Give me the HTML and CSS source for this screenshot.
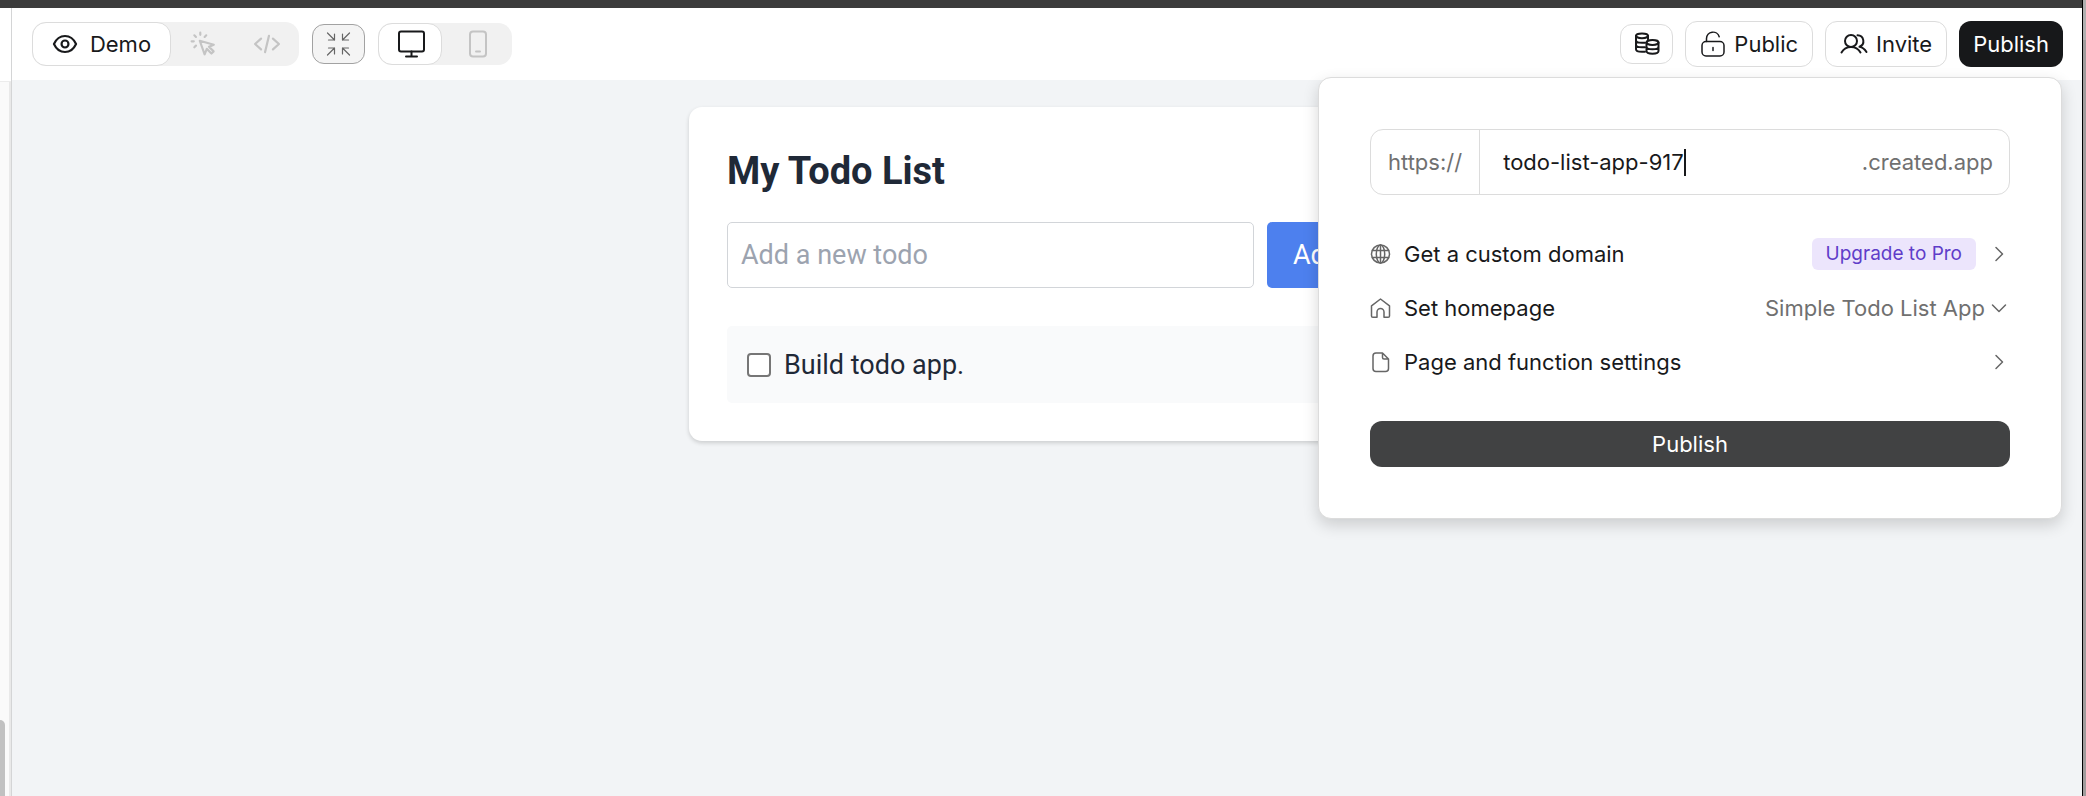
FILE: index.html
```html
<!DOCTYPE html>
<html lang="en">
<head>
    <meta charset="UTF-8">
    <meta name="viewport" content="width=device-width, initial-scale=1.0">
    <title>Simple Todo List App</title>
    <link rel="stylesheet" href="styles.css">
</head>
<body>
    <div class="window">
        <div class="window-main">
            <div class="title-strip"></div>
            <div class="workspace">
                <aside class="side">
                    <div class="side-head"></div>
                    <div class="side-body">
                        <div class="side-scroll"></div>
                    </div>
                </aside>

                <div class="content">
                    <header class="toolbar">
                        <div class="segmented modes">
                            <button class="segment segment-active segment-demo">
                                <svg width="26" height="26" viewBox="0 0 24 24"><path d="M1.800 12C4 7.200 7.600 4.600 12 4.600S20 7.200 22.200 12C20 16.800 16.400 19.400 12 19.400S4 16.800 1.800 12z"/><circle cx="12" cy="12" r="3.200"/></svg>
                                Demo
                            </button>
                            <button class="segment" aria-label="Select element">
                                <svg width="26" height="26" viewBox="0 0 24 24"><path d="M9 9l4.500 12.500 2-5 4.300 4.300 2-2-4.300-4.300 4.500-1.800z"/><path d="M9.500 1.500v2M4 4l1.500 1.500M15 4l-1.500 1.500M1.500 9.500h2M4 15l1.500-1.500"/></svg>
                            </button>
                            <button class="segment" aria-label="Code">
                                <svg width="26" height="26" viewBox="0 0 24 24"><path d="M6.500 7L1 12l5.500 5M17.500 7l5.500 5-5.500 5M13.800 4.500l-3.600 15"/></svg>
                            </button>
                        </div>

                        <button class="icon-button icon-button-on" aria-label="Collapse">
                            <svg width="26" height="26" viewBox="0 0 26 26"><path d="M1.500 2l7 7M8.500 3v6h-6M23.500 2l-7 7M16.500 3v6h6M1.500 24l7-7M2.500 17h6v6M23.500 24l-7-7M22.500 17h-6v6"/></svg>
                        </button>

                        <div class="segmented devices">
                            <button class="segment segment-active" aria-label="Desktop">
                                <svg width="30" height="30" viewBox="0 0 30 30"><rect x="4" y="2.500" width="25" height="20" rx="2"/><path d="M16.500 22.500V27M11 27.500h11"/></svg>
                            </button>
                            <button class="segment" aria-label="Mobile">
                                <svg width="30" height="30" viewBox="0 0 30 30"><rect x="8" y="2.500" width="16" height="25" rx="3"/><path d="M14 22.500h4"/></svg>
                            </button>
                        </div>

                        <div class="actions">
                            <button class="icon-button" aria-label="Database">
                                <svg width="26" height="26" viewBox="0 0 26 26"><ellipse cx="8" cy="4.800" rx="6" ry="2.400"/><path d="M2 4.800v13.400c0 1.500 2.500 2.600 6 2.600h3M14 4.800v3.500M2 9.300c0 1.400 2.500 2.500 6 2.500h3M2 13.800c0 1.400 2.500 2.500 6 2.500h3"/><ellipse cx="18.500" cy="11.500" rx="6" ry="2.400"/><path d="M12.500 11.500v8.600c0 1.500 2.600 2.600 6 2.600s6-1.100 6-2.600v-8.600M12.500 15.800c0 1.400 2.600 2.500 6 2.500s6-1.100 6-2.500"/></svg>
                            </button>
                            <button class="outline-button">
                                <svg class="thin" width="26" height="26" viewBox="0 0 26 26"><rect x="2" y="10.500" width="22" height="14.500" rx="4"/><path d="M6.500 10.500V7.500a6.500 6.500 0 0 1 12.700-1.800M13 16.500v3"/></svg>
                                Public
                            </button>
                            <button class="outline-button">
                                <svg width="28" height="28" viewBox="0 0 28 28"><circle cx="11" cy="11" r="6"/><path d="M1.500 22.500c2-3.500 5.500-5.500 9.500-5.500s7.500 2 9.500 5.500M17.500 5.200a6 6 0 0 1 2 11.600c3 .6 5.300 2.500 7 5.200"/></svg>
                                Invite
                            </button>
                            <button class="publish-button">Publish</button>
                        </div>
                    </header>

                    <main class="preview">
                        <section class="todo-card">
                            <h1 class="todo-title">My Todo List</h1>
                            <form class="todo-form">
                                <input class="todo-input" type="text" placeholder="Add a new todo" aria-label="Add a new todo">
                                <button class="todo-add" type="button">Add</button>
                            </form>
                            <label class="todo-item">
                                <input class="todo-check" type="checkbox">
                                Build todo app.
                            </label>
                        </section>
                    </main>

                    <div class="popover">
                        <div class="url-field">
                            <label class="url-prefix" for="subdomain">https://</label>
                            <input class="url-input" id="subdomain" type="text" value="todo-list-app-917" autocomplete="off" spellcheck="false">
                            <span class="caret"></span>
                            <span class="url-suffix">.created.app</span>
                        </div>

                        <div class="options">
                            <a class="option" href="#">
                                <svg width="22" height="22" viewBox="0 0 22 22"><circle cx="10.500" cy="11" r="9"/><ellipse cx="10.500" cy="11" rx="4.200" ry="9"/><path d="M2.500 7.500h16M2.500 14.500h16M10.500 2v18"/></svg>
                                <span class="option-name">Get a custom domain</span>
                                <span class="badge">Upgrade to Pro</span>
                                <svg class="chevron" width="22" height="22" viewBox="0 0 22 22"><path d="M8 4.500l6.500 6.500L8 17.500"/></svg>
                            </a>
                            <div class="option">
                                <svg width="22" height="22" viewBox="0 0 22 22"><path d="M1.500 8.800l9-6.800 9 6.800V19a1.300 1.300 0 0 1-1.300 1.300H14V15a3.500 3.500 0 0 0-7 0v5.300H2.800A1.300 1.300 0 0 1 1.500 19z"/></svg>
                                <label class="option-name" for="homepage">Set homepage</label>
                                <select class="option-select" id="homepage">
                                    <option>Simple Todo List App</option>
                                </select>
                                <svg class="chevron" width="22" height="22" viewBox="0 0 22 22"><path d="M4.500 8l6.500 6.500L17.500 8"/></svg>
                            </div>
                            <a class="option" href="#">
                                <svg width="22" height="22" viewBox="0 0 22 22"><path d="M6 2h6.500l6 6v9.500a3 3 0 0 1-3 3H6a3 3 0 0 1-3-3V5a3 3 0 0 1 3-3zM12.500 2v4.500A1.500 1.500 0 0 0 14 8h4.500"/></svg>
                                <span class="option-name">Page and function settings</span>
                                <svg class="chevron" width="22" height="22" viewBox="0 0 22 22"><path d="M8 4.500l6.500 6.500L8 17.500"/></svg>
                            </a>
                        </div>

                        <button class="popover-publish">Publish</button>
                    </div>
                </div>
            </div>
        </div>
        <div class="window-edge"></div>
    </div>
</body>
</html>
```
FILE: styles.css
```css
* {
    margin: 0;
    padding: 0;
    box-sizing: border-box;
}

body {
    font-family: Inter, Arial, sans-serif;
    font-size: 22px;
    color: #18191b;
    background: #f2f4f6;
}

button,
input,
select {
    font: inherit;
    color: inherit;
    border: none;
    background: none;
}

button {
    display: flex;
    align-items: center;
    justify-content: center;
    cursor: pointer;
}

a {
    color: inherit;
    text-decoration: none;
}

svg {
    flex: none;
    fill: none;
    stroke: currentColor;
    stroke-width: 2;
    stroke-linecap: round;
    stroke-linejoin: round;
}

.window {
    display: flex;
    min-height: 100vh;
}

.window-main {
    display: flex;
    flex-direction: column;
    flex: 1;
}

.title-strip {
    height: 8px;
    background: #3c3c3c;
}

.workspace {
    display: flex;
    flex: 1;
}

/* Left panel edge */
.side {
    display: flex;
    flex-direction: column;
    width: 12px;
    background: #fff;
    border-right: 1px solid #d4d5d6;
}

.side-head {
    height: 74px;
    border-bottom: 1px solid #ececec;
}

.side-body {
    display: flex;
    align-items: flex-end;
    flex: 1;
    background: #fafafa;
    border-right: 2px solid #e9e9e9;
}

.side-scroll {
    width: 5px;
    height: 76px;
    background: #c1c1c1;
    border-top-right-radius: 5px;
}

.window-edge {
    width: 4px;
    background: linear-gradient(#b0b0b0 40px, #a09c9c 40px);
    border-left: 1px solid #000;
}

.content {
    position: relative;
    display: flex;
    flex-direction: column;
    flex: 1;
}

/* Toolbar */
.toolbar {
    display: flex;
    align-items: center;
    gap: 13px;
    height: 72px;
    padding: 0 19px 0 20px;
    background: #fff;
}

.segmented {
    display: flex;
    background: #f1f1f1;
    border-radius: 14px;
}

.segment {
    width: 64px;
    height: 44px;
    color: #c4c4c4;
    border: 1px solid transparent;
    border-radius: 14px;
}

.segment-active {
    color: #18191b;
    background: #fff;
    border-color: #dcdcdc;
}

.segment-demo {
    gap: 12px;
    width: 139px;
}

.devices .segment {
    height: 42px;
}

.devices .segment:last-child {
    width: 70px;
}

.icon-button {
    width: 53px;
    height: 40px;
    border: 1px solid #dcdcdc;
    border-radius: 12px;
}

.icon-button-on {
    color: #666;
    background: #f4f4f4;
    border-color: #a2a2a2;
}

.icon-button-on svg {
    stroke-width: 1.2;
}

.actions {
    display: flex;
    align-items: center;
    gap: 12px;
    margin-left: auto;
}

.outline-button {
    gap: 8px;
    height: 46px;
    padding: 0 14px;
    border: 1px solid #dcdcdc;
    border-radius: 12px;
}

.thin {
    stroke-width: 1.5;
}

.publish-button {
    height: 46px;
    padding: 0 14px;
    color: #fff;
    background: #17181a;
    border-radius: 12px;
}

/* App preview */
.preview {
    flex: 1;
    padding: 27px;
    font-family: Roboto, Arial, sans-serif;
    font-size: 27px;
    color: #1f2937;
}

.todo-card {
    max-width: 716px;
    margin: 0 auto;
    padding: 38px;
    background: #fff;
    border-radius: 13px;
    box-shadow: 0 2px 4px rgba(0, 0, 0, 0.16);
}

.todo-title {
    margin-bottom: 25px;
    font-size: 38px;
    line-height: 52px;
    font-weight: 700;
}

.todo-form {
    display: flex;
    gap: 13px;
    margin-bottom: 38px;
}

.todo-input {
    flex: 1;
    min-width: 0;
    height: 66px;
    padding: 0 13px;
    border: 1px solid #d2d5d9;
    border-radius: 5px;
}

.todo-input::placeholder {
    color: #9ca3af;
}

.todo-add {
    padding: 0 26px;
    color: #fff;
    background: #4d80ee;
    border-radius: 5px;
}

.todo-item {
    display: flex;
    align-items: center;
    gap: 13px;
    height: 77px;
    padding: 0 20px;
    background: #f9fafb;
    border-radius: 5px;
}

.todo-check {
    appearance: none;
    width: 24px;
    height: 24px;
    background: #fff;
    border: 2px solid #767676;
    border-radius: 4px;
}

.todo-check:checked {
    background: #4d80ee;
}

/* Publish popover */
.popover {
    position: absolute;
    top: 69px;
    right: 20px;
    width: 744px;
    padding: 51px;
    background: #fff;
    border: 1px solid #dcdcdc;
    border-radius: 13px;
    box-shadow: 0 6px 16px rgba(0, 0, 0, 0.16);
}

.url-field {
    display: flex;
    align-items: center;
    height: 66px;
    border: 1px solid #dcdcdc;
    border-radius: 13px;
}

.url-prefix {
    display: flex;
    align-items: center;
    height: 100%;
    padding: 0 17px;
    color: #707070;
    border-right: 1px solid #dcdcdc;
}

.url-input {
    field-sizing: content;
    padding-left: 23px;
    outline: none;
    caret-color: transparent;
}

.caret {
    width: 2px;
    height: 27px;
    background: #18191b;
}

.url-suffix {
    margin-left: auto;
    padding-right: 16px;
    color: #707070;
}

.options {
    display: flex;
    flex-direction: column;
    gap: 22px;
    margin: 43px 0;
}

.option {
    display: flex;
    align-items: center;
    height: 32px;
}

.option svg {
    color: #666;
    stroke-width: 1.5;
}

.option-name {
    margin: 0 auto 0 12px;
}

.badge {
    margin-right: 12px;
    padding: 0 14px;
    font-size: 19px;
    line-height: 32px;
    color: #5f3dc9;
    background: #ece5fc;
    border-radius: 6px;
}

.option-select {
    appearance: none;
    margin-right: 3px;
    color: #707070;
    cursor: pointer;
}

.popover-publish {
    width: 100%;
    height: 46px;
    color: #fff;
    background: #414243;
    border-radius: 12px;
}
```
